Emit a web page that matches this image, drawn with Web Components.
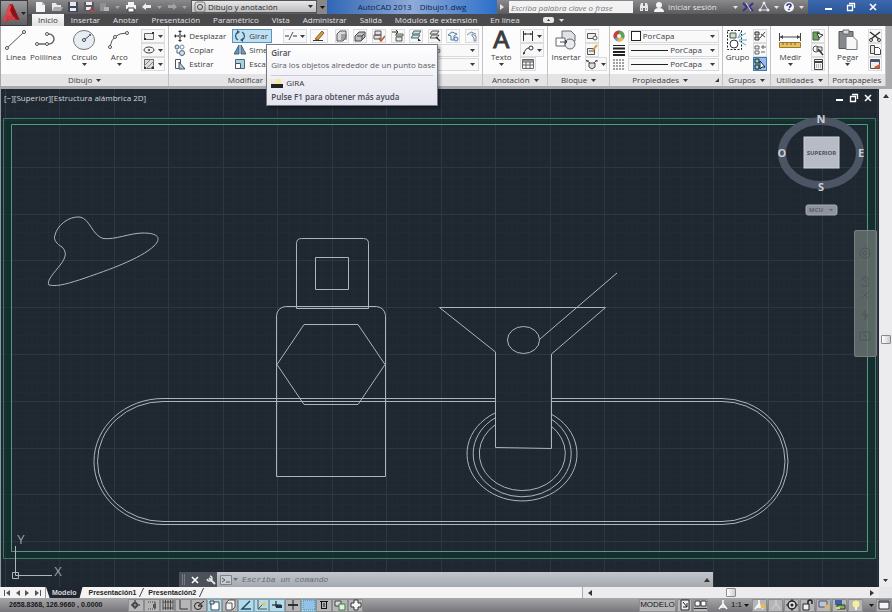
<!DOCTYPE html>
<html lang="es">
<head>
<meta charset="utf-8">
<title>AutoCAD 2013 Dibujo1.dwg</title>
<style>
  html, body { height: 100%; }
  body { margin: 0; overflow: hidden; font: 8px/10px "Open Sans", "Noto Sans", sans-serif; color: #3c3c3e; }
</style>
</head>
<body>
<cad-app></cad-app>

<script>
// Shared reset for every shadow root
const BASE = `
  *, :host { box-sizing: border-box; }
  button, input, select { font: inherit; color: inherit; margin: 0; padding: 0; border: 0; background: none; border-radius: 0; }
  button { display: flex; align-items: center; justify-content: center; }
`;

// name: [width, height, markup]
const ICONS = {
  // title bar
  new: [12, 12, '<path d="M1 1h6l3 3v7H1z" fill="#f4f4f4"/><path d="M7 1v3h3" fill="#bbb"/>'],
  open: [12, 12, '<path d="M1 10V2h4l1 2h4v6z" fill="#e9e9e9"/><path d="M3 6h9l-2 4H1z" fill="#aaa"/>'],
  save: [12, 12, '<path d="M1 1h10v10H1z" fill="#3e4658"/><path d="M3 1h6v4H3zM3 7h6v3H3z" fill="#e6e9f0"/>'],
  saveas: [12, 12, '<path d="M1 1h10v9H1z" fill="#5a5561"/><path d="M3 1h6v3H3zM3 6h5v3H3z" fill="#f1eaea"/><path d="M7 8l4 3" stroke="#b4493c" stroke-width="2"/>'],
  plot: [12, 12, '<path d="M1 2h6v8H1z" fill="#909094"/><path d="M5 6h5v4H5z" fill="#b4b4b8"/>'],
  print: [12, 12, '<path d="M3 1h6v3H3zM1 4h10v4H1z" fill="#f4f4f4"/><path d="M3 7h6v4H3z" fill="#fff" stroke="#444" stroke-width="1"/>'],
  undo: [12, 12, '<path d="M5 2L1 6l4 3V7h5V4H5z" fill="#eee"/>'],
  redo: [12, 12, '<path d="M7 2l4 4-4 3V7H2V4h5z" fill="#a2a2a6"/>'],
  gear: [12, 12, '<rect x="1" y="1" width="10" height="10" rx="2" fill="none" stroke="#777"/><circle cx="6" cy="6" r="2.500" fill="none" stroke="#444"/>'],
  find: [12, 12, '<path d="M2 10V5l1-3h2v3h2V2h2l1 3v5H7V7H5v3z" fill="#e8e8e8"/><path d="M3 8h1M8 8h1" stroke="#555"/>'],
  user: [12, 12, '<circle cx="6" cy="4" r="3" fill="#f4f4f4"/><path d="M1 11q0-4 5-4t5 4z" fill="#f4f4f4"/>'],
  exchange: [12, 12, '<path d="M1 2l4 4-4 4M11 2L7 6l4 4" fill="none" stroke="#39358c" stroke-width="2"/><path d="M4 2l5 8" stroke="#ddd"/>'],
  share: [12, 12, '<path d="M6 2l4 7H2z" fill="none" stroke="#e6e6f4"/><circle cx="6" cy="2" r="1.500" fill="#e6e6f4"/><circle cx="2" cy="9" r="1.500" fill="#e6e6f4"/><circle cx="10" cy="9" r="1.500" fill="#e6e6f4"/>'],
  help: [12, 12, '<circle cx="6" cy="6" r="5" fill="#f4f4fa"/><path d="M4 5q0-2 2-2t2 1.500q0 1-2 2" fill="none" stroke="#2b3a78" stroke-width="1.500"/><path d="M5.200 8.500h1.600" stroke="#2b3a78" stroke-width="1.500"/>'],
  min: [10, 10, '<path d="M1 7h7" stroke="#fff" stroke-width="2"/>'],
  restore: [10, 10, '<path d="M3 1.500h5.500V6M1.500 3.500h5v5h-5z" fill="none" stroke="#fff" stroke-width="1.300"/>'],
  close: [10, 10, '<path d="M2 2l6 6M8 2L2 8" stroke="#fff" stroke-width="1.600"/>'],
  logo: [18, 24, '<g transform="scale(.8 1)"><path d="M9 3h4l9 16-7-1-3-8-2 8-9 4z" fill="#c3282d"/><path d="M9 3l4 6-3 7-9 6z" fill="#e4474a"/><path d="M13 3l9 16-7-1-5-9z" fill="#8f1218"/><path d="M5 14l11 2 1 3-13-1z" fill="#d9393d"/></g>'],
  // draw
  line: [24, 22, '<path d="M3 19L20 3" stroke="#555"/><g fill="#fff" stroke="#555"><circle cx="3" cy="19" r="1.500"/><circle cx="20" cy="3" r="1.500"/></g>'],
  pline: [24, 22, '<path d="M3 15h12a5 5 0 0 0 0-10h-2" fill="none" stroke="#666" stroke-width="1.500"/><g fill="#fff" stroke="#555"><circle cx="3" cy="15" r="1.500"/><circle cx="13" cy="15" r="1.500"/><circle cx="13" cy="5" r="1.500"/></g>'],
  circle: [24, 22, '<ellipse cx="12" cy="11" rx="10.500" ry="9.500" fill="#e8edf2" stroke="#777"/><path d="M12 11l5-4" stroke="#446"/><circle cx="12" cy="11" r="1.500" fill="#fff" stroke="#345"/><circle cx="18" cy="6" r="1" fill="#345"/>'],
  arc: [24, 22, '<path d="M3 18Q5 4 20 4" fill="none" stroke="#555"/><g fill="#fff" stroke="#555"><circle cx="3" cy="18" r="1.500"/><circle cx="8" cy="8" r="1.500"/><circle cx="20" cy="4" r="1.500"/></g>'],
  rect: [12, 12, '<path d="M1.500 3.500h9v6h-9z" fill="#eee" stroke="#666"/><path d="M1 8h2v2H1zM9 2h2v2H9z" fill="#333"/>'],
  ellipse: [12, 12, '<ellipse cx="6" cy="6" rx="5" ry="3" fill="#f1f1f1" stroke="#444"/><circle cx="6" cy="6" r="1" fill="#333"/>'],
  hatch: [12, 12, '<path d="M1.500 1.500h9v9h-9z" fill="#ddd" stroke="#666"/><path d="M1 8l7-7M3 11l8-8M7 11l4-4" stroke="#888"/><path d="M1 9h2v2H1zM9 9h2v2H9z" fill="#333"/>'],
  // modify
  move: [12, 12, '<path d="M6 1v10M1 6h10" stroke="#333"/><path d="M6 0l2 2H4zM6 12l2-2H4zM0 6l2-2v4zM12 6l-2-2v4z" fill="#333"/><path d="M5 5h2v2H5z" fill="#fff" stroke="#333" stroke-width=".7"/>'],
  copy: [12, 12, '<circle cx="3" cy="3" r="2" fill="#cfe2f3" stroke="#44617c"/><circle cx="8" cy="3" r="2" fill="#fff" stroke="#6d8aa5"/><circle cx="8" cy="9" r="2.500" fill="#cfe2f3" stroke="#44617c"/><path d="M3 6v3h2" fill="none" stroke="#44617c"/>'],
  stretch: [12, 12, '<path d="M1.500 1.500h5v9h-5z" fill="#fff" stroke="#456"/><path d="M5 4l6 7H5z" fill="#a5c9df" stroke="#456"/>'],
  rotate: [12, 12, '<path d="M4 2a4.500 4.500 0 0 0 0 8M8 10a4.500 4.500 0 0 0 0-8" fill="none" stroke="#2c536e" stroke-width="1.200"/><path d="M3 0l3 2-3 2zM9 12l-3-2 3-2z" fill="#2c536e"/>'],
  mirror: [12, 12, '<path d="M5 1v9H0z" fill="#5f96c4" stroke="#2c4e70" stroke-width=".8"/><path d="M7 1v9h5z" fill="#7f98b0" stroke="#2c4e70" stroke-width=".8"/>'],
  scale: [12, 12, '<path d="M1.500 1.500h9v9h-9z" fill="#a3d3dd" stroke="#567"/><path d="M1.500 5.500h5v5h-5z" fill="#fff" stroke="#456"/>'],
  trim: [12, 12, '<path d="M0 6h4M8 6h4" stroke="#333"/><path d="M4 10l4-8" stroke="#555"/>'],
  brush: [14, 12, '<path d="M3 9L10 1l2 2-6 7z" fill="#d39a3d" stroke="#6b4a1f" stroke-width=".8"/><path d="M1 10.500h10" stroke="#333"/>'],
  layers: [12, 12, '<path d="M1 4l3-3h6v6l-3 4H1z" fill="#d8d8da" stroke="#555"/><path d="M5 5h6M5 7h6M5 9h6" stroke="#666"/>'],
  layers2: [12, 12, '<path d="M1 6l4-4h6v5l-4 4H1z" fill="#bcbcc0" stroke="#444"/><path d="M3 6h5l2-2M8 6v4" fill="none" stroke="#444"/>'],
  layers3: [12, 12, '<path d="M2 1h6v4H2zM1 5h7v4H1z" fill="#e2e2e4" stroke="#555"/><path d="M6 8l2 3 4-5" fill="none" stroke="#b5542f" stroke-width="1.500"/>'],
  layers4: [12, 12, '<path d="M4 4h7v2H4zM4 7h6v4H4z" fill="#e6e6e8" stroke="#555"/><path d="M0 2h5M4 0l2 2-2 2" stroke="#333" fill="none"/>'],
  layers5: [12, 12, '<path d="M4 1h7L9 4H2zM3 5h7L8 8H1z" fill="#cfe0e4" stroke="#466"/><path d="M8 8v3h3z" fill="#222"/>'],
  layers6: [12, 12, '<path d="M3 1h7L8 4H1zM3 5h7L8 8H1z" fill="#e8e8ea" stroke="#555"/><path d="M7 7l4 4" stroke="#333" stroke-width="1.500"/>'],
  light: [12, 12, '<path d="M1 5l4-3 5 2-3 2v4H4V6z" fill="#eef3f8" stroke="#5579a0"/><circle cx="9" cy="9" r="2" fill="#dce9f6" stroke="#4c79ad"/>'],
  light2: [12, 12, '<path d="M1 5l4-3 5 2M6 6V4l4 2v5H8V8z" fill="#eceef0" stroke="#7a8ea5"/>'],
  // annotation and block
  dim: [12, 12, '<path d="M1.500 1v10M10.500 1v10M2 4h8" fill="none" stroke="#333"/><path d="M2 4l2-1v2zM10 4L8 3v2z" fill="#333"/>'],
  leader: [12, 12, '<path d="M2 10Q3 4 7 4" fill="none" stroke="#333"/><circle cx="9" cy="4" r="2" fill="#fff" stroke="#333"/><path d="M1 11V8l2 1z" fill="#333"/>'],
  table: [12, 12, '<path d="M.5 1.500h11v9H.5zM.5 4h11M.5 7h11M4 4v6M8 4v6" fill="#f4f4f4" stroke="#666"/><path d="M1 2h10v2H1z" fill="#88929c"/>'],
  insert: [24, 22, '<path d="M8 2h9l4 4v6H8z" fill="#dfe2e4" stroke="#666"/><path d="M2 9h9v8H2z" fill="#fff" stroke="#666"/><circle cx="16" cy="15" r="5" fill="#e9ecee" stroke="#666"/><path d="M6 13h7l-2-2M13 13l-2 2" fill="none" stroke="#345"/>'],
  block1: [12, 12, '<path d="M1.500 3.500h8v5h-8z" fill="#eee" stroke="#555"/><circle cx="9" cy="8" r="2" fill="#fff" stroke="#555"/>'],
  block2: [12, 12, '<path d="M1.500 4.500h7v6h-7zM3 7h6" fill="#eee" stroke="#555"/><path d="M7 6l4-5" stroke="#d99a2b" stroke-width="2"/>'],
  block3: [12, 12, '<path d="M0 2l4 3M11 2L8 5M3 5h6v4l-3 2-3-2z" fill="#ddd" stroke="#444"/><path d="M0 3h3M9 3h3" stroke="#444"/>'],
  // properties
  wheel: [12, 12, '<circle cx="6" cy="6" r="5.500" fill="#6d9fd0"/><path d="M6 6V.5a5.500 5.500 0 0 1 4.800 8.200z" fill="#5aa35c"/><path d="M6 6L1.200 8.700A5.500 5.500 0 0 1 6 .5z" fill="#c93f37"/><path d="M6 6l4.800 2.700a5.500 5.500 0 0 1-6.500 2.500z" fill="#e9b948"/><circle cx="6" cy="6" r="2" fill="#f6f1ea"/>'],
  weight: [12, 12, '<path d="M0 1.500h12" stroke="#222"/><path d="M0 4.500h12M0 8h12" stroke="#222" stroke-width="2"/><path d="M0 11h12" stroke="#222" stroke-width="2"/>'],
  ltype: [12, 12, '<path d="M0 2h12M0 5h12M0 8h12M0 11h12" stroke="#444" stroke-dasharray="2 1"/>'],
  // groups, utilities, clipboard
  group: [22, 22, '<path d="M1.500 1.500h14v19h-14z" fill="none" stroke="#222" stroke-dasharray="2 1.500"/><path d="M4 4h6v5H4z" fill="#cfe3b9" stroke="#456"/><circle cx="8" cy="15" r="4" fill="#fff" stroke="#333"/><path d="M12 9l8-5M13 11h8M12 9l3-6M13 12l7 4" stroke="#5fa5c4"/>'],
  ungroup: [12, 12, '<path d="M1 2h4v3H1zM1 7h4v3H1z" fill="#ccc" stroke="#333"/><path d="M6 8l5-6M7 4l4 3" stroke="#444"/>'],
  gedit: [12, 12, '<path d="M1 2h4v3H1zM1 7h4v3H1z" fill="#eee" stroke="#666"/><path d="M7 3h5M7 8h4M9 1v4" stroke="#666"/>'],
  gsel: [12, 12, '<path d="M1 1h4v4H1zM1 7h4v4H1z" fill="#9fd5ad" stroke="#123"/><path d="M6 3l5 6H8l-2 2z" fill="#fff" stroke="#123"/>'],
  measure: [24, 22, '<path d="M1.500 4v8M22.500 4v8M2 8h20" stroke="#444"/><path d="M2 8l3-2v4zM22 8l-3-2v4z" fill="#444"/><path d="M1.500 13.500h21v5h-21z" fill="#e7c064" stroke="#9b7a2c"/><path d="M5 14v2M9 14v2M13 14v2M17 14v2" stroke="#7a5f20"/>'],
  qsel: [12, 12, '<path d="M1 2h6v8H1z" fill="#6fa45e" stroke="#3c5a34"/><path d="M5 3l6 2-4 3z" fill="#fff" stroke="#333"/>'],
  point: [12, 12, '<circle cx="4" cy="5" r="3" fill="#fff" stroke="#555"/><path d="M5 3h5v4H5z" fill="#e4e4e4" stroke="#555"/><path d="M6 5l5 6" stroke="#333" stroke-width="1.500"/>'],
  calc: [12, 12, '<path d="M2.500 1.500h8v10h-8z" fill="#f4f4f4" stroke="#444"/><path d="M3 4h7" stroke="#444" stroke-width="2"/><path d="M4 7h5M4 9h5" stroke="#777" stroke-dasharray="1 1"/>'],
  paste: [24, 22, '<path d="M3 2.500h14v17H3z" fill="#85888c" stroke="#555"/><path d="M7 1h6v4H7z" fill="#ddd" stroke="#666"/><path d="M10 7.500h7l4 4v9H10z" fill="#f7f7f8" stroke="#777"/>'],
  cut: [12, 12, '<path d="M1 2l9 7M11 2L2 9" stroke="#333" stroke-width="1.500"/><circle cx="2" cy="10" r="1.500" fill="none" stroke="#333"/><circle cx="10" cy="10" r="1.500" fill="none" stroke="#333"/>'],
  clip: [12, 12, '<path d="M1.500 1.500h4v8h-4z" fill="#e8e8e8" stroke="#444"/><path d="M5.500 3.500h4l2 2v5h-6z" fill="#fff" stroke="#444"/>'],
  match: [12, 12, '<path d="M1.500 1.500h9v9h-9z" fill="#eee" stroke="#555"/><path d="M2 3h8" stroke="#36558c" stroke-width="2"/><path d="M5 9l6-3v3l-4 2z" fill="#d2562f"/>'],
  // status bar
  infer: [12, 12, '<path d="M1 6h9M5 1v9" stroke="#222"/><path d="M3 4h4v4H3z" fill="#888" stroke="#222"/>'],
  snap: [12, 12, '<path d="M2 3h7v7H2M9 3v7" fill="none" stroke="#444" stroke-dasharray="1 1"/><path d="M7 5h3v4H7z" fill="#555"/>'],
  gridi: [12, 12, '<path d="M1 1v10M3.500 1v10M6 1v10M8.500 1v10M11 1v10M1 3h10M1 9h10" stroke="#333" stroke-width=".8"/>'],
  ortho: [12, 12, '<path d="M3 1v9h8" fill="none" stroke="#333"/>'],
  polar: [12, 12, '<circle cx="5" cy="7" r="3.500" fill="#bbb" stroke="#222"/><path d="M5 7l6-5M5 7h5" stroke="#222"/>'],
  osnap: [12, 12, '<path d="M2 3h8v8H2z" fill="#fff" stroke="#445"/><path d="M1 2h4v3H1z" fill="#d7e9ee" stroke="#345"/>'],
  osnap3: [12, 12, '<path d="M2 4l3-3h6v7l-3 3H2z" fill="#f3f3f3" stroke="#555"/><path d="M2 4h6v7" fill="none" stroke="#555"/>'],
  angle: [12, 12, '<path d="M10 2L2 10h9" fill="none" stroke="#1e4f6a" stroke-width="1.500"/>'],
  ducs: [12, 12, '<path d="M2 1v9h9M2 10l6-6" fill="none" stroke="#555"/><path d="M8 2l1 2 2 1-2 1-1 2-1-2-2-1 2-1z" fill="#e5c65c"/>'],
  dyn: [12, 12, '<path d="M1 6h9M5 2v6" stroke="#111"/><path d="M5 6h6v3H5z" fill="#234"/>'],
  lwt: [12, 12, '<path d="M1 6h10M6 1v10" stroke="#222"/><path d="M1 6h10" stroke="#222" stroke-width="1.500"/>'],
  tpy: [14, 12, '<path d="M1 1h12v10H1z" fill="#92c3e6" stroke="#4d84ad" stroke-dasharray="1 1"/>'],
  qp: [12, 12, '<path d="M2 2.500h8M3.500 2v8M8.500 2v8M3 9.500h6M6 4v4" fill="none" stroke="#111"/>'],
  sc: [12, 12, '<path d="M1 2h6v5H1z" fill="#ddd" stroke="#444"/><path d="M5 5h6v6H5z" fill="#dff0dc" stroke="#3e7a41"/>'],
  am: [12, 12, '<path d="M4 1h4v3h3v4H8v3H4V8H1V4h3z" fill="#f4f4f4" stroke="#333"/>'],
  mspace: [12, 12, '<path d="M2 1h8v10H2z" fill="#eee" stroke="#222"/><path d="M4 3l4 5M8 4v4H4" stroke="#222" fill="none"/>'],
  lay: [14, 12, '<path d="M1 2h5v5H1zM7 2h5v5H7z" fill="#fff" stroke="#333"/><path d="M0 9.500h13" stroke="#333"/>'],
  ann: [12, 12, '<path d="M6 1v4M6 5L2 10M6 5l4 5M3 8h6" fill="none" stroke="#fff" stroke-width="1.500"/>'],
  ann2: [12, 12, '<path d="M5 1v4M5 5L1 10M5 5l4 5M3 8h5" fill="none" stroke="#fff" stroke-width="1.500"/><circle cx="9" cy="7" r="2.500" fill="#e7b95c"/>'],
  ann3: [12, 12, '<path d="M6 1v4M6 5L2 10M6 5l4 5" fill="none" stroke="#d6d6d8"/>'],
  ws: [12, 12, '<circle cx="6" cy="6" r="4" fill="#ddd" stroke="#222" stroke-width="1.500"/><circle cx="6" cy="6" r="1.500" fill="#222"/><path d="M6 0v2M6 10v2M0 6h2M10 6h2" stroke="#222"/>'],
  lock: [12, 12, '<path d="M1 5h6v6H1z" fill="#eee" stroke="#222"/><path d="M6 5V2q2-2 4 0v3" fill="none" stroke="#222" stroke-width="1.500"/>'],
  hw: [12, 12, '<path d="M1 2h8v6H1z" fill="#b9c5dc" stroke="#556"/><circle cx="9" cy="8" r="2.500" fill="#d9b765"/>'],
  iso: [12, 12, '<path d="M1 1h7v5H1z" fill="#3a62b0"/><path d="M3 6h8v4H3z" fill="#86b45b" stroke="#333"/><path d="M2 9h4" stroke="#e6d85a" stroke-width="2"/>'],
  bulb: [12, 12, '<circle cx="6" cy="5" r="3.500" fill="#f5ee9a"/><path d="M5 8h2v3H5z" fill="#eee"/>'],
  clean: [12, 12, '<path d="M1 2h10v8H1z" fill="#f4f4f6" stroke="#333"/><path d="M1 3h10" stroke="#456" stroke-width="1.500"/>'],
  wrench: [12, 12, '<path d="M4 4l6 6" stroke="#e6e6e6" stroke-width="2"/><path d="M2 5a2.500 2.500 0 1 0 3-3" fill="none" stroke="#e6e6e6" stroke-width="1.500"/>'],
  prompt: [12, 12, '<path d="M.5 1.500h11v9H.5z" fill="#c8ccd2" stroke="#7d8188"/><path d="M2 4l3 2-3 2M6 8h4" fill="none" stroke="#555"/>'],
  gira: [12, 10, '<path d="M0 1h10v5H0z" fill="#f3ea96"/><path d="M0 6h12v4H0z" fill="#222"/><path d="M1 1h4v4H1z" fill="#e9e9e9"/>'],
  pill: [12, 8, '<rect x="0" y="1" width="11" height="6" rx="2" fill="#e6e6e6"/><path d="M4 5l1.500-2L7 5z" fill="#333"/>'],
  // arrows
  down: [5, 3, '<path d="M0 0h5L2.500 3z" fill="currentColor"/>'],
  up: [6, 4, '<path d="M0 4h6L3 0z" fill="currentColor"/>'],
  right: [4, 6, '<path d="M0 0v6l4-3z" fill="currentColor"/>'],
  left: [4, 6, '<path d="M4 0v6L0 3z" fill="currentColor"/>'],
  first: [6, 6, '<path d="M6 0v6L2 3zM0 0h1v6H0z" fill="currentColor"/>'],
  last: [6, 6, '<path d="M0 0v6l4-3zM5 0h1v6H5z" fill="currentColor"/>'],
  more: [4, 4, '<path d="M4 0v4H0z" fill="currentColor"/>']
};

class CadIcon extends HTMLElement {
  constructor() {
    super();
    this.attachShadow({ mode: 'open' });
  }
  connectedCallback() {
    const [w, h, body] = ICONS[this.getAttribute('name')];
    this.shadowRoot.innerHTML = `
      <style>
        :host { display: block; flex: none; width: ${w}px; height: ${h}px; }
        svg { display: block; }
      </style>
      <svg width="${w}" height="${h}" viewBox="0 0 ${w} ${h}" aria-hidden="true">${body}</svg>`;
  }
}

// Button with an icon. "large" stacks the label under it, "arrow" adds a drop-down mark.
class ToolButton extends HTMLElement {
  constructor() {
    super();
    this.attachShadow({ mode: 'open' });
  }
  connectedCallback() {
    const icon = this.getAttribute('icon');
    const label = this.getAttribute('label') || '';
    this.shadowRoot.innerHTML = `
      <style>${BASE}
        :host { display: block; position: relative; flex: none; }
        button { height: 14px; gap: 3px; padding: 0 1px; border: 1px solid transparent; white-space: nowrap; width: 100%; }
        :host([framed]) button { border-color: #dcdcde; background: #f8f8f9; }
        :host([active]) button { border-color: #5c93bd; background: #bfe0f2; }
        :host([pressed]) button { border-color: #4678b8; background: #93bdf0; }
        :host([large]) button { flex-direction: column; height: 42px; gap: 1px; justify-content: flex-start; padding: 0; border: 0; }
        :host([start]) button { justify-content: flex-start; }
        :host([plain]) button { padding: 0; }
        .glyph { font: 24px/22px "Liberation Sans", sans-serif; height: 22px; -webkit-text-stroke: 1px; }
      </style>
      <button type="button" ${label ? `aria-label="${label}"` : ''}>
        ${icon ? `<cad-icon name="${icon}"></cad-icon>` : '<span class="glyph">A</span>'}
        <slot></slot>
        ${this.hasAttribute('arrow') ? '<cad-icon name="down"></cad-icon>' : ''}
      </button>
      <slot name="tip"></slot>`;
  }
}

class RibbonPanel extends HTMLElement {
  constructor() {
    super();
    this.attachShadow({ mode: 'open' });
  }
  connectedCallback() {
    const title = this.getAttribute('title-text');
    this.shadowRoot.innerHTML = `
      <style>${BASE}
        :host { display: flex; flex-direction: column; min-width: 0; border-right: 1px solid #c3c3c6; background: #fcfcfc; }
        .body { flex: 1; display: flex; align-items: flex-start; gap: var(--gap, 4px); padding: 3px 3px 0; min-width: 0; }
        .title { display: flex; align-items: center; justify-content: center; gap: 4px; height: 12px; background: #e4e4e6; white-space: nowrap; }
        .launch { display: flex; margin-right: 3px; }
        .launch-pad { flex: 1; }
        .title.wide span { flex: 1; }
      </style>
      <div class="body"><slot></slot></div>
      <div class="title">
        ${this.hasAttribute('launcher') ? '<span class="launch-pad"></span>' : ''}
        ${title}
        ${title && !this.hasAttribute('fixed') ? '<cad-icon name="down"></cad-icon>' : ''}
        ${this.hasAttribute('launcher') ? '<span class="launch-pad"></span><button type="button" class="launch" aria-label="Más"><cad-icon name="more"></cad-icon></button>' : ''}
      </div>`;
  }
}

class DropList extends HTMLElement {
  constructor() {
    super();
    this.attachShadow({ mode: 'open' });
  }
  connectedCallback() {
    this.shadowRoot.innerHTML = `
      <style>${BASE}
        :host { display: flex; align-items: center; gap: 2px; height: 13px; padding: 0 3px 0 2px; border: 1px solid #d9d9dc; background: #f9f9fa; min-width: 0; }
        select { flex: 1; min-width: 0; appearance: none; height: 11px; padding-left: var(--indent, 0); }
      </style>
      <slot></slot>
      <select aria-label="${this.getAttribute('label')}"><option>${this.getAttribute('value') || ''}</option></select>
      <cad-icon name="down"></cad-icon>`;
  }
}

class ToolTip extends HTMLElement {
  constructor() {
    super();
    this.attachShadow({ mode: 'open' });
    this.shadowRoot.innerHTML = `
      <style>${BASE}
        :host { display: block; position: absolute; z-index: 5; left: 34px; top: 15px; width: 172px; padding: 3px 4px 3px;
          border: 1px solid #767684; background: linear-gradient(#fff, #e3e4ef); box-shadow: 2px 2px 3px #0006;
          color: #5a5a64; white-space: nowrap; }
        b { display: block; font-weight: 600; color: #4a4a54; }
        p { margin: 2px 0 0; padding-bottom: 5px; border-bottom: 1px solid #c9cad6; }
        .cmd { display: flex; align-items: center; gap: 3px; margin: 2px 0 4px; color: #333; }
      </style>
      <b>Girar</b>
      <p>Gira los objetos alrededor de un punto base</p>
      <div class="cmd"><cad-icon name="gira"></cad-icon>GIRA</div>
      <b>Pulse F1 para obtener más ayuda</b>`;
  }
}

class TitleBar extends HTMLElement {
  constructor() {
    super();
    this.attachShadow({ mode: 'open' });
    this.shadowRoot.innerHTML = `
      <style>${BASE}
        :host { display: flex; height: 14px; color: #e4e4e6; background: linear-gradient(#8a8a8d, #5b5b5e); }
        div { display: flex; align-items: center; white-space: nowrap; }
        .quick { width: 163px; justify-content: space-between; padding: 0 4px 0 7px; }
        .quick .dim { color: #a5a5a8; }
        drop-list { width: 126px; color: #29292b; background: linear-gradient(#e8e8e9, #bcbcbe); border-color: #555; }
        .end { width: 10px; justify-content: center; background: #88888a; color: #111; }
        .name { flex: 1; justify-content: center; gap: 8px; color: #0d2347; background: linear-gradient(90deg, #2f66b4, #8eabd8 50%, #2c6fc9); }
        .info { flex: none; width: 311px; gap: 5px; padding-left: 3px; }
        input { flex: none; width: 124px; height: 12px; padding: 0 2px; color: #555; background: #f2f2f3; font-style: italic; }
        input::placeholder { color: #777; }
        .account { flex: 1; gap: 3px; }
        .links { gap: 4px; justify-content: flex-end; padding-right: 4px; }
        .win { flex: none; width: 84px; justify-content: space-between; padding: 0 14px 0 16px; background: linear-gradient(#3c69ad, #2a5596); }
      </style>
      <div class="quick">
        <cad-icon name="new"></cad-icon><cad-icon name="open"></cad-icon><cad-icon name="save"></cad-icon>
        <cad-icon name="saveas"></cad-icon><cad-icon name="plot"></cad-icon><cad-icon class="dim" name="down"></cad-icon>
        <cad-icon name="print"></cad-icon><cad-icon name="undo"></cad-icon><cad-icon class="dim" name="down"></cad-icon>
        <cad-icon name="redo"></cad-icon><cad-icon class="dim" name="down"></cad-icon>
      </div>
      <drop-list label="Espacio de trabajo" value="Dibujo y anotación"><cad-icon name="gear"></cad-icon></drop-list>
      <div class="end"><cad-icon name="down"></cad-icon></div>
      <div class="name"><span>AutoCAD 2013</span><span>Dibujo1.dwg</span></div>
      <div class="info">
        <cad-icon name="right"></cad-icon>
        <input type="text" aria-label="Buscar" placeholder="Escriba palabra clave o frase">
        <div class="account"><cad-icon name="find"></cad-icon><cad-icon name="user"></cad-icon><span>Iniciar sesión</span></div>
        <div class="links">
          <cad-icon name="down"></cad-icon>
          <cad-icon name="exchange"></cad-icon><cad-icon name="share"></cad-icon><cad-icon name="down"></cad-icon>
          <cad-icon name="help"></cad-icon><cad-icon name="down"></cad-icon>
        </div>
      </div>
      <div class="win">
        <button type="button" aria-label="Minimizar"><cad-icon name="min"></cad-icon></button>
        <button type="button" aria-label="Restaurar"><cad-icon name="restore"></cad-icon></button>
        <button type="button" aria-label="Cerrar"><cad-icon name="close"></cad-icon></button>
      </div>`;
  }
}

class RibbonTabs extends HTMLElement {
  constructor() {
    super();
    this.attachShadow({ mode: 'open' });
    const tabs = ['Inicio', 'Insertar', 'Anotar', 'Presentación', 'Paramétrico', 'Vista', 'Administrar', 'Salida', 'Módulos de extensión', 'En línea'];
    this.shadowRoot.innerHTML = `
      <style>${BASE}
        :host { display: flex; height: 12px; padding-left: 4px; background: #4a4a4d; color: #e2e2e4; }
        button { height: 12px; padding: 0 6px; margin-right: 1px; white-space: nowrap; }
        button[aria-selected=true] { background: linear-gradient(#f8f8f8, #e2e2e4); color: #333; }
        .view { gap: 4px; padding-left: 16px; }
      </style>
      ${tabs.map((t, i) => `<button type="button" role="tab" aria-selected="${i === 0}">${t}</button>`).join('')}
      <button type="button" class="view" aria-label="Minimizar cinta"><cad-icon name="pill"></cad-icon><cad-icon name="down"></cad-icon></button>`;
  }
}

class CadRibbon extends HTMLElement {
  constructor() {
    super();
    this.attachShadow({ mode: 'open' });
    this.shadowRoot.innerHTML = `
      <style>${BASE}
        :host { display: flex; height: 63px; padding: 0 6px 3px 1px; background: #a9a9ac; }
        .col { display: flex; flex-direction: column; flex: none; }
        .row { display: flex; align-items: center; height: 14px; gap: 3px; }
        .grow { flex: 1; min-width: 0; }
        .spread { justify-content: space-between; }
        drop-list { flex: 1; }
        .swatch { width: 10px; height: 10px; border: 1px solid #222; background: #fff; }
        .stroke { flex: 1; height: 1px; background: #222; }
        .draw { flex: 169 1 0; --gap: 2px; }
        .modify { flex: 163 1 0; border-right-color: transparent; }
        .layer { flex: 152 1 0; }
        .note { flex: 65 1 0; }
        .block { flex: 61 1 0; }
        .props { flex: 113 1 0; }
        .groups { flex: 48 1 0; }
        .utils { flex: 57 1 0; }
        .board { flex: 57 1 0; }
        .second { width: 40px; }
        .state { --indent: 98px; }
      </style>
      <ribbon-panel class="draw" title-text="Dibujo">
        <tool-button large icon="line">Línea</tool-button>
        <tool-button large icon="pline">Polilínea</tool-button>
        <span class="grow"></span>
        <tool-button large icon="circle" arrow>Círculo</tool-button>
        <span class="grow"></span>
        <tool-button large icon="arc" arrow>Arco</tool-button>
        <span class="grow"></span>
        <div class="col">
          <tool-button framed icon="rect" arrow label="Rectángulo"></tool-button>
          <tool-button framed icon="ellipse" arrow label="Elipse"></tool-button>
          <tool-button framed icon="hatch" arrow label="Sombreado"></tool-button>
        </div>
      </ribbon-panel>
      <ribbon-panel class="modify" title-text="Modificar">
        <div class="col">
          <tool-button start icon="move">Desplazar</tool-button>
          <tool-button start icon="copy">Copiar</tool-button>
          <tool-button start icon="stretch">Estirar</tool-button>
        </div>
        <div class="col second">
          <tool-button start active icon="rotate">Girar<tool-tip slot="tip"></tool-tip></tool-button>
          <tool-button start icon="mirror" label="Simetría">Sime</tool-button>
          <tool-button start icon="scale" label="Escala">Esca</tool-button>
        </div>
        <span class="grow"></span>
        <div class="row">
          <tool-button framed icon="trim" arrow label="Recortar"></tool-button>
          <tool-button framed icon="brush" label="Borrar"></tool-button>
        </div>
      </ribbon-panel>
      <ribbon-panel class="layer" title-text="">
        <div class="grow">
          <div class="row spread">
            <tool-button framed plain icon="layers" label="Propiedades de capas"></tool-button>
            <tool-button framed plain icon="layers2" label="Estado de capas"></tool-button>
            <tool-button framed plain icon="layers3" label="Definir capa actual"></tool-button>
            <tool-button framed plain icon="layers4" label="Igualar capa"></tool-button>
            <tool-button framed plain icon="layers5" label="Capa previa"></tool-button>
            <tool-button framed plain icon="layers6" label="Aislar capa"></tool-button>
            <tool-button framed plain icon="light" label="Inutilizar capa"></tool-button>
            <tool-button framed plain icon="light2" label="Desactivar capa"></tool-button>
          </div>
          <div class="row"><drop-list class="state" label="Estado de capas" value="o"></drop-list></div>
          <div class="row"><drop-list label="Capa"></drop-list></div>
        </div>
      </ribbon-panel>
      <ribbon-panel class="note" title-text="Anotación">
        <span class="grow"></span>
        <tool-button large arrow>Texto</tool-button>
        <span class="grow"></span>
        <div class="col">
          <tool-button framed icon="dim" arrow label="Cota"></tool-button>
          <tool-button framed icon="leader" arrow label="Directriz"></tool-button>
          <div class="row"><tool-button framed icon="table" label="Tabla"></tool-button></div>
        </div>
      </ribbon-panel>
      <ribbon-panel class="block" title-text="Bloque">
        <tool-button large icon="insert">Insertar</tool-button>
        <div class="col">
          <div class="row"><tool-button framed plain icon="block1" label="Crear bloque"></tool-button></div>
          <div class="row"><tool-button framed plain icon="block2" label="Editor de bloques"></tool-button></div>
          <tool-button framed plain icon="block3" arrow label="Atributos"></tool-button>
        </div>
      </ribbon-panel>
      <ribbon-panel class="props" title-text="Propiedades" launcher>
        <div class="grow">
          <div class="row"><cad-icon name="wheel"></cad-icon><drop-list label="Color" value="PorCapa"><span class="swatch"></span></drop-list></div>
          <div class="row"><cad-icon name="weight"></cad-icon><drop-list label="Grosor de línea" value="PorCapa"><span class="stroke"></span></drop-list></div>
          <div class="row"><cad-icon name="ltype"></cad-icon><drop-list label="Tipo de línea" value="PorCapa"><span class="stroke"></span></drop-list></div>
        </div>
      </ribbon-panel>
      <ribbon-panel class="groups" title-text="Grupos">
        <tool-button large icon="group">Grupo</tool-button>
        <div class="col">
          <tool-button framed plain icon="ungroup" label="Desagrupar"></tool-button>
          <tool-button framed plain icon="gedit" label="Editar grupo"></tool-button>
          <tool-button pressed plain icon="gsel" label="Selección de grupo"></tool-button>
        </div>
      </ribbon-panel>
      <ribbon-panel class="utils" title-text="Utilidades">
        <span class="grow"></span>
        <tool-button large icon="measure" arrow>Medir</tool-button>
        <span class="grow"></span>
        <div class="col">
          <tool-button framed plain icon="qsel" label="Selección rápida"></tool-button>
          <tool-button framed plain icon="point" label="Seleccionar similares"></tool-button>
          <tool-button framed plain icon="calc" label="Calculadora"></tool-button>
        </div>
      </ribbon-panel>
      <ribbon-panel class="board" title-text="Portapapeles" fixed>
        <span class="grow"></span>
        <tool-button large icon="paste" arrow>Pegar</tool-button>
        <span class="grow"></span>
        <div class="col">
          <tool-button framed plain icon="cut" label="Cortar"></tool-button>
          <tool-button framed plain icon="clip" label="Copiar"></tool-button>
          <tool-button framed plain icon="match" label="Igualar propiedades"></tool-button>
        </div>
      </ribbon-panel>`;
  }
}

// Scroll bar with its two arrows; --before and --after share out the track around the thumb
class ScrollStrip extends HTMLElement {
  constructor() {
    super();
    this.attachShadow({ mode: 'open' });
  }
  connectedCallback() {
    const v = this.hasAttribute('vertical');
    this.shadowRoot.innerHTML = `
      <style>${BASE}
        :host { display: flex; flex-direction: ${v ? 'column' : 'row'}; align-items: center; background: #ececee; color: #333; padding: ${v ? '5px 0' : '0 5px'}; }
        i { flex: var(--before); }
        b + i { flex: var(--after); }
        b { width: 10px; height: 9px; border: 1px solid #8a8a8e; border-radius: 1px; background: linear-gradient(90deg, #fff, #ccc); }
      </style>
      <cad-icon name="${v ? 'up' : 'left'}"></cad-icon><i></i><b></b><i></i><cad-icon name="${v ? 'down' : 'right'}"></cad-icon>`;
  }
}

class ViewCube extends HTMLElement {
  constructor() {
    super();
    this.attachShadow({ mode: 'open' });
    this.shadowRoot.innerHTML = `
      <style>
        :host { display: block; width: 90px; height: 106px; }
        svg { display: block; }
        text { font: bold 11px/11px "Open Sans", sans-serif; fill: #c9ced6; text-anchor: middle; }
        .face { font-size: 6px; fill: #4b5160; }
        .ucs { font-size: 6px; fill: #5c626c; }
      </style>
      <svg width="90" height="106" viewBox="776 112 90 106">
        <ellipse cx="821" cy="153" rx="39" ry="32" fill="none" stroke="#4c5563" stroke-width="8"/>
        <rect x="804" y="137" width="35" height="31" fill="#b7bbc6" stroke="#d0d3da"/>
        <text class="face" x="821.500" y="155">SUPERIOR</text>
        <text x="821" y="123">N</text>
        <text x="821" y="191">S</text>
        <text x="782" y="157">O</text>
        <text x="861" y="157">E</text>
        <rect x="806" y="205" width="31" height="10" rx="2" fill="#8e939c" stroke="#a6abb3"/>
        <text class="ucs" x="816" y="212">MCU</text>
        <path d="M829 209h4l-2 2z" fill="#5c626c"/>
      </svg>`;
  }
}

class NavBar extends HTMLElement {
  constructor() {
    super();
    this.attachShadow({ mode: 'open' });
    this.shadowRoot.innerHTML = `
      <style>
        :host { display: block; width: 23px; height: 127px; border: 1px solid #73807f; border-radius: 2px; background: #66716fd9; box-sizing: border-box; }
        svg { display: block; margin: 0 auto; }
      </style>
      <svg width="21" height="125" fill="none" stroke="#4d575c">
        <circle cx="10" cy="22" r="5"/><circle cx="10" cy="22" r="2"/>
        <path d="M6 50q4-9 8 0M7 47l7 6M6 55h8"/>
        <path d="M6 60l8 8M14 60l-8 8"/>
        <path d="M6 84h8M10 79v10M7 81l6 6"/>
        <path d="M5 101h10v8H5zM8 103l4 3"/>
      </svg>`;
  }
}

class CommandLine extends HTMLElement {
  constructor() {
    super();
    this.attachShadow({ mode: 'open' });
    this.shadowRoot.innerHTML = `
      <style>${BASE}
        :host { display: flex; align-items: center; height: 15px; background: linear-gradient(#c3c7cd, #a4a8af); color: #333; padding-right: 3px; }
        .grip { display: flex; align-items: center; gap: 5px; width: 38px; height: 15px; padding-left: 3px; margin-right: 3px; background: #4c5058; }
        .bar { width: 3px; height: 11px; border: solid #777c84; border-width: 0 1px; }
        .mark { margin: 0 4px 0 1px; color: #6a6e76; }
        input { flex: 1; font: italic 8px/12px "Liberation Mono", monospace; }
        input::placeholder { color: #686d76; }
      </style>
      <div class="grip">
        <span class="bar"></span>
        <cad-icon name="close"></cad-icon>
        <cad-icon name="wrench"></cad-icon>
      </div>
      <cad-icon name="prompt"></cad-icon>
      <cad-icon class="mark" name="down"></cad-icon>
      <input type="text" aria-label="Comando" placeholder="Escriba un comando">
      <cad-icon name="up"></cad-icon>`;
  }
}

class DrawingArea extends HTMLElement {
  constructor() {
    super();
    this.attachShadow({ mode: 'open' });
    this.shadowRoot.innerHTML = `
      <style>${BASE}
        :host { display: block; position: relative; overflow: hidden; background: #1f2731; border-left: 1px solid #8d9aa2; }
        .sheet { display: block; width: 100%; height: 100%; }
        .axis { font: 13px/14px "Open Sans", sans-serif; fill: #9aa0a8; text-anchor: middle; }
        .head { position: absolute; left: 3px; top: 4px; color: #d4d8de; white-space: nowrap; }
        .ctrl { position: absolute; right: 6px; top: 4px; display: flex; gap: 4px; }
        view-cube { position: absolute; right: 13px; top: 23px; }
        nav-bar { position: absolute; right: 2px; top: 141px; }
        command-line { position: absolute; left: 178px; right: 166px; bottom: 0; }
      </style>
      <svg class="sheet" viewBox="1 89 878 498" preserveAspectRatio="xMinYMin meet" fill="none">
        <g id="grid"></g>
        <path d="M3 118h873v441H3zM11 124v427h856V124z" fill="#12302c" fill-opacity=".7" fill-rule="evenodd"/>
        <path d="M3.500 118.500h872v440h-872z" stroke="#3d7a68"/>
        <path d="M11.500 124.500h856v427h-856z" stroke="#4f9b7f"/>
        <g stroke="#aeb4bd">
          <path d="M49 285C46 281 54 273 61 264C66 257 67 252 62 247C57 244 53 240 55 235C57 226 68 216 80 217C90 219 92 235 103 238.500C115 240 130 233 143 233C158 233 162 238 154 246C140 259 108 270 85 278C70 283 58 287 49 285Z"/>
          <path d="M495 398.500H163A69 63 0 0 0 163 524.500H722A66 63 0 0 0 722 398.500H552"/>
          <path d="M495 401.500H163A65.500 60 0 0 0 163 521.500H722A63 60 0 0 0 722 401.500H552"/>
          <path d="M296.500 308.500V243.500q0-5 5-5h62q5 0 5 5V308.500z"/>
          <path d="M315.500 257.500h33v32h-33z"/>
          <path d="M276.500 476.500V315.500q1-8 9-9h91q8 1 9 9V476.500z"/>
          <path d="M277 364.500L304 324.500H358L385 364.500L358 404.500H304z"/>
          <path d="M439.500 307.500H605.500L551.500 354V448.500L495.500 447.500V352z"/>
          <ellipse cx="523.500" cy="340" rx="16" ry="13.500"/>
          <path d="M540 339L617 273"/>
          <path d="M495 413A55 47 0 1 0 551 414"/>
          <path d="M495 418A49 43 0 1 0 551 419"/>
          <path d="M495 425A43 37 0 1 0 551 426"/>
          <path d="M15.500 546V575.500H52M12.500 572.500h6v6h-6z"/>
        </g>
        <text class="axis" x="21" y="544">Y</text>
        <text class="axis" x="58" y="576">X</text>
      </svg>
      <div class="head">[−][Superior][Estructura alámbrica 2D]</div>
      <div class="ctrl"><cad-icon name="min"></cad-icon><cad-icon name="restore"></cad-icon><cad-icon name="close"></cad-icon></div>
      <view-cube></view-cube>
      <nav-bar></nav-bar>
      <command-line></command-line>`;
    this.drawGrid();
  }

  // every fifth line is a major one
  drawGrid() {
    let minor = '';
    let major = '';
    for (let i = 0; i <= 81; i++) {
      const x = Math.round(4.5 + i * 10.9) + 0.5;
      if (i % 5) minor += `M${x} 89v498`; else major += `M${x} 89v498`;
    }
    for (let i = 0; i <= 52; i++) {
      const y = Math.round(92 + i * 9.36) + 0.5;
      if ((i - 3) % 5) minor += `M1 ${y}h878`; else major += `M1 ${y}h878`;
    }
    this.shadowRoot.getElementById('grid').innerHTML =
      `<path d="${minor}" stroke="#222a34"/><path d="${major}" stroke="#2d3741"/>`;
  }
}

class LayoutTabs extends HTMLElement {
  constructor() {
    super();
    this.attachShadow({ mode: 'open' });
    this.shadowRoot.innerHTML = `
      <style>${BASE}
        :host { display: flex; height: 11px; background: #f4f4f5; font: bold 7px/10px "Liberation Sans", sans-serif; color: #222; }
        .steps { display: flex; align-items: center; justify-content: space-between; width: 46px; padding: 0 4px; border-right: 1px solid #999; color: #555; }
        .on { padding: 0 6px; background: #20262f; color: #d8d8da; clip-path: polygon(0 0, 100% 0, 92% 100%, 10% 100%); }
        .tab { padding: 0 0 0 6px; }
        .tab::after { content: ""; width: 1px; height: 9px; margin-left: 5px; background: #444; transform: skewX(-25deg); }
        .room { flex: 1; }
        scroll-strip { width: 297px; --before: 132; --after: 133; border-left: 1px solid #aaa; }
        .corner { width: 13px; background: #e6e6e8; }
      </style>
      <div class="steps"><cad-icon name="first"></cad-icon><cad-icon name="left"></cad-icon><cad-icon name="right"></cad-icon><cad-icon name="last"></cad-icon></div>
      <button type="button" class="on">Modelo</button>
      <button type="button" class="tab">Presentación1</button>
      <button type="button" class="tab">Presentación2</button>
      <span class="room"></span>
      <scroll-strip></scroll-strip>
      <span class="corner"></span>`;
  }
}

class StatusBar extends HTMLElement {
  constructor() {
    super();
    this.attachShadow({ mode: 'open' });
    const on = ['osnap', 'angle', 'ducs', 'dyn', 'tpy'];
    const modes = ['infer', 'snap', 'gridi', 'ortho', 'polar', 'osnap', 'osnap3', 'angle', 'ducs', 'dyn', 'lwt', 'tpy', 'qp', 'sc', 'am'];
    this.shadowRoot.innerHTML = `
      <style>${BASE}
        :host { display: flex; align-items: center; height: 14px; background: linear-gradient(#a7a7aa, #77777b); font: 8px/10px "Liberation Sans", sans-serif; color: #161618; }
        .xyz { width: 128px; padding-left: 9px; font-size: 7px; font-weight: bold; white-space: nowrap; }
        .set { display: flex; align-items: center; height: 13px; }
        .set button { width: 15px; height: 13px; border: 1px solid #8d8d90; background: #b5b5b8; margin-right: 1px; }
        .modes button { margin: 0; width: 16px; }
        .modes button:nth-child(3n) { width: 15px; }
        .set .on { background: #b4dbe8; border-color: #7fa9b8; }
        .room { flex: 1; }
        .set .word { width: 37px; }
        .set .scale { width: 36px; gap: 2px; margin-left: 6px; background: none; border: 0; }
        .set .tail { margin-right: 6px; }
        .set .mark { margin-right: 2px; }
      </style>
      <div class="xyz">2658.8368, 126.9660 , 0.0000</div>
      <div class="set modes">
        ${modes.map(m => `<button type="button" aria-label="${m}" class="${on.includes(m) ? 'on' : ''}"><cad-icon name="${m}"></cad-icon></button>`).join('')}
      </div>
      <span class="room"></span>
      <div class="set">
        <button type="button" class="word">MODELO</button>
        <button type="button" aria-label="Modelo"><cad-icon name="mspace"></cad-icon></button>
        <button type="button" aria-label="Presentaciones"><cad-icon name="lay"></cad-icon></button>
        <button type="button" class="scale"><cad-icon name="ann"></cad-icon>1:1<cad-icon name="down"></cad-icon></button>
        <button type="button" aria-label="Visibilidad de anotación"><cad-icon name="ann2"></cad-icon></button>
        <button type="button" aria-label="Escala automática"><cad-icon name="ann3"></cad-icon></button>
        <button type="button" aria-label="Espacio de trabajo"><cad-icon name="ws"></cad-icon></button>
        <button type="button" aria-label="Bloquear"><cad-icon name="lock"></cad-icon></button>
        <button type="button" aria-label="Aceleración"><cad-icon name="hw"></cad-icon></button>
        <button type="button" aria-label="Aislar"><cad-icon name="iso"></cad-icon></button>
        <button type="button" class="tail" aria-label="Avisos"><cad-icon name="bulb"></cad-icon></button>
        <cad-icon class="mark" name="down"></cad-icon>
        <button type="button" aria-label="Pantalla limpia"><cad-icon name="clean"></cad-icon></button>
      </div>`;
  }
}

class CadApp extends HTMLElement {
  constructor() {
    super();
    this.attachShadow({ mode: 'open' });
    this.shadowRoot.innerHTML = `
      <style>${BASE}
        :host { display: flex; flex-direction: column; height: 100vh; }
        header { display: flex; }
        .menu { width: 28px; gap: 1px; border: 1px solid #3c3c3e; background: linear-gradient(#9d9da0, #5f5f62); color: #222; }
        .bars { flex: 1; min-width: 0; }
        main { flex: 1; display: flex; min-height: 0; }
        drawing-area { flex: 1; min-width: 0; }
        main scroll-strip { width: 13px; --before: 236; --after: 234; }
      </style>
      <header>
        <button type="button" class="menu" aria-label="Menú de la aplicación"><cad-icon name="logo"></cad-icon><cad-icon name="down"></cad-icon></button>
        <div class="bars"><title-bar></title-bar><ribbon-tabs></ribbon-tabs></div>
      </header>
      <cad-ribbon></cad-ribbon>
      <main><drawing-area></drawing-area><scroll-strip vertical></scroll-strip></main>
      <layout-tabs></layout-tabs>
      <status-bar></status-bar>`;
  }
}

customElements.define('cad-icon', CadIcon);
customElements.define('tool-button', ToolButton);
customElements.define('drop-list', DropList);
customElements.define('ribbon-panel', RibbonPanel);
customElements.define('tool-tip', ToolTip);
customElements.define('title-bar', TitleBar);
customElements.define('ribbon-tabs', RibbonTabs);
customElements.define('cad-ribbon', CadRibbon);
customElements.define('scroll-strip', ScrollStrip);
customElements.define('view-cube', ViewCube);
customElements.define('nav-bar', NavBar);
customElements.define('command-line', CommandLine);
customElements.define('drawing-area', DrawingArea);
customElements.define('layout-tabs', LayoutTabs);
customElements.define('status-bar', StatusBar);
customElements.define('cad-app', CadApp);
</script>
</body>
</html>
